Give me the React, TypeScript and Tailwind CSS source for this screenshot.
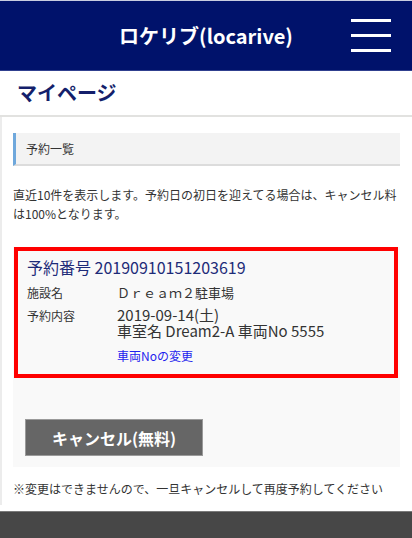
export default function App() {
    return (
        <div className="w-[412px] min-h-[538px] bg-white font-['Noto_Sans_CJK_JP','Noto_Sans',sans-serif] text-[#333]">
            {/* Header */}
            <header className="h-[71px] bg-[#00126b] border-t border-[#c8cce0] border-b border-b-[#30408f] grid grid-cols-[1fr_auto_1fr] items-center">
                <div />
                <h1 className="text-white text-[20px] font-bold leading-none">ロケリブ(locarive)</h1>
                <div className="flex justify-end pr-[21px]">
                    <button className="w-[40px] flex flex-col gap-[12px]">
                        <span className="block h-[3px] bg-white" />
                        <span className="block h-[3px] bg-white" />
                        <span className="block h-[3px] bg-white" />
                    </button>
                </div>
            </header>

            {/* Page title */}
            <div className="h-[46px] px-[17px] flex items-center border-b-2 border-[#e2e2e0]">
                <h2 className="text-[20px] font-bold text-[#141f6b] leading-none">マイページ</h2>
            </div>

            {/* Content */}
            <main className="border-l-2 border-[#ececec] pl-[11px] pr-[12px] pt-[16px] pb-[6px]">
                <div className="h-[33px] bg-[#f3f3f3] border-l-[3px] border-[#6fa8dc] border-b-2 border-b-[#dcdcdc] flex items-center pl-[10px]">
                    <span className="text-[12px]">予約一覧</span>
                </div>

                <p className="mt-[19px] text-[12px] leading-[19px]">
                    直近10件を表示します。予約日の初日を迎えてる場合は、キャンセル料は100%となります。
                </p>

                {/* Reservation card */}
                <div className="mt-[24px] bg-[#f9f9f9] pb-[11px]">
                    <div className="ml-px mr-[2px] border-4 border-[#ff0000] px-[9px] pt-[4px] pb-[10px]">
                        <div className="text-[16px] leading-[24px] text-[#1d2b78]">予約番号 20190910151203619</div>
                        <div className="mt-[4px] flex">
                            <span className="w-[90px] shrink-0 text-[12px] leading-[20px]">施設名</span>
                            <span className="text-[13px] leading-[20px]">Ｄｒｅａｍ２駐車場</span>
                        </div>
                        <div className="mt-[3px] flex items-start">
                            <span className="w-[90px] shrink-0 text-[12px] leading-[20px]">予約内容</span>
                            <div className="mt-[1px]">
                                <div className="text-[15px] leading-[16px]">2019-09-14(土)</div>
                                <div className="text-[15px] leading-[16px]">車室名 Dream2-A 車両No 5555</div>
                                <a className="block mt-[9px] text-[12px] leading-[16px] text-[#1f1fee]">車両Noの変更</a>
                            </div>
                        </div>
                    </div>

                    <button className="mt-[41px] ml-[12px] w-[178px] h-[37px] bg-[#666666] border border-[#9a9a9a] text-white text-[16px] font-bold">
                        キャンセル(無料)
                    </button>
                </div>

                <p className="mt-[12px] text-[12px] leading-[20px]">
                    ※変更はできませんので、一旦キャンセルして再度予約してください
                </p>
            </main>

            {/* Footer */}
            <footer className="mt-[6px] h-[27px] bg-[#474747] border-t border-[#7a7a7a]" />
        </div>
    );
}
